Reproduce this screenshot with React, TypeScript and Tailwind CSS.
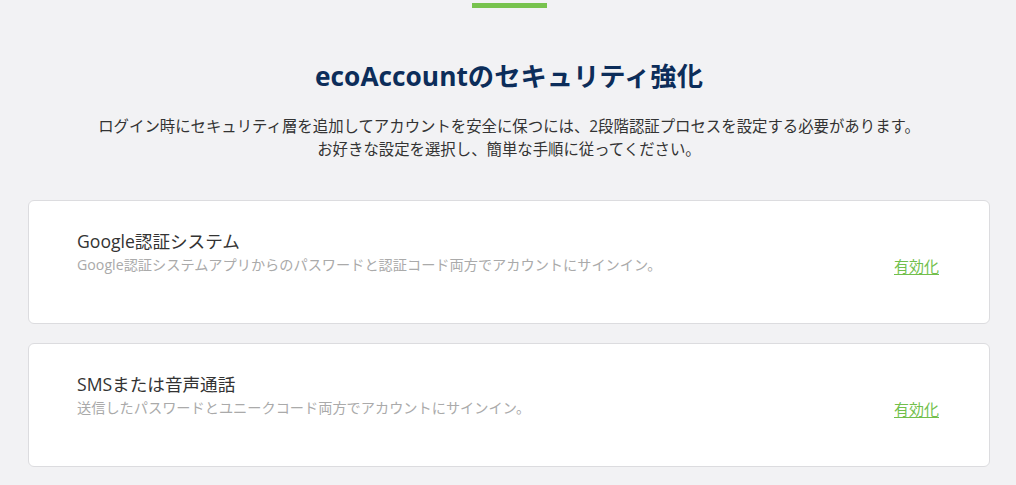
import React from 'react';

const font = { fontFamily: '"Open Sans", "Noto Sans CJK JP", sans-serif' };

type Method = { title: string; desc: string };

const methods: Method[] = [
  {
    title: 'Google認証システム',
    desc: 'Google認証システムアプリからのパスワードと認証コード両方でアカウントにサインイン。',
  },
  {
    title: 'SMSまたは音声通話',
    desc: '送信したパスワードとユニークコード両方でアカウントにサインイン。',
  },
];

const MethodCard: React.FC<{ method: Method }> = ({ method }) => (
  <div className="bg-white border border-[#dcdcdf] rounded-md pl-12 pr-[50px] pt-7 pb-[48px] flex items-end justify-between">
    <div className="flex flex-col">
      <div className="text-[17.6px] leading-6 text-[#333]">{method.title}</div>
      <div className="text-[14.2px] leading-5 mt-0.5 text-[#aaaaaa]">{method.desc}</div>
    </div>
    <a href="#" className="text-[15px] leading-5 text-[#72bf4c] underline underline-offset-2 mb-[-1px]">
      有効化
    </a>
  </div>
);

export default function App() {
  return (
    <div className="min-h-[485px] bg-[#f2f2f4] pl-7 pr-[26px] pb-5" style={font}>
      <div className="flex justify-center pt-[3px]">
        <div className="w-[75px] h-[5px] bg-[#78c34e]" />
      </div>
      <h1 className="mt-[50px] text-center text-[26.3px] leading-9 font-bold text-[#0c2d5a]">
        ecoAccountのセキュリティ強化
      </h1>
      <p className="mt-[21px] text-center text-[15.4px] leading-[23px] text-[#333]">
        ログイン時にセキュリティ層を追加してアカウントを安全に保つには、2段階認証プロセスを設定する必要があります。
        <br />
        お好きな設定を選択し、簡単な手順に従ってください。
      </p>
      <div className="mt-[39px] flex flex-col gap-[19px]">
        {methods.map((m) => (
          <MethodCard key={m.title} method={m} />
        ))}
      </div>
    </div>
  );
}
